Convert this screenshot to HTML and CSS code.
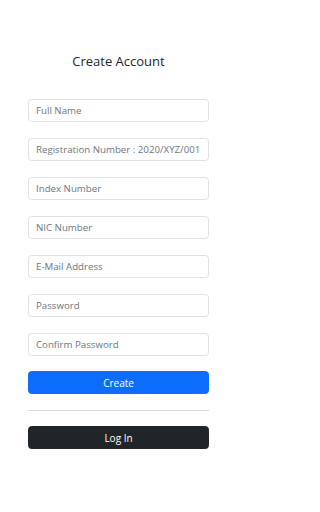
FILE: index.html
```html
<!DOCTYPE html>
<html>
<head>
<meta charset="utf-8">
<link rel="stylesheet" href="styles.css">
</head>
<body>
<div class="page">
  <h4 class="title">Create Account</h4>
  <form class="form">
    <input class="field" type="text" placeholder="Full Name">
    <input class="field" type="text" placeholder="Registration Number : 2020/XYZ/001">
    <input class="field" type="text" placeholder="Index Number">
    <input class="field" type="text" placeholder="NIC Number">
    <input class="field" type="email" placeholder="E-Mail Address">
    <input class="field" type="password" placeholder="Password">
    <input class="field" type="password" placeholder="Confirm Password">
    <button class="btn btn-primary" type="button">Create</button>
  </form>
  <hr class="divider">
  <button class="btn btn-dark" type="button">Log In</button>
</div>
</body>
</html>
```
FILE: styles.css
```css
* { box-sizing: border-box; }
html, body { margin: 0; padding: 0; background: #fff; }
body {
  font-family: "Open Sans", "Noto Sans", "Liberation Sans", sans-serif;
  color: #212529;
  padding-left: 28px;
}
.page {
  width: 181px;
  padding-top: 52px;
  display: flex;
  flex-direction: column;
}
.title {
  margin: 0 0 28px 0;
  font-size: 13px;
  font-weight: 400;
  text-align: center;
  line-height: 19px;
}
.form {
  display: flex;
  flex-direction: column;
  gap: 16px;
  margin: 0;
}
.field {
  display: block;
  width: 100%;
  height: 23px;
  padding: 0 7px;
  font-family: inherit;
  font-size: 9.7px;
  color: #212529;
  border: 1px solid #dee2e6;
  border-radius: 3.6px;
  background: #fff;
  outline: none;
}
.field::placeholder { color: #6c757d; opacity: 1; }
.btn {
  display: block;
  width: 100%;
  height: 23px;
  padding: 0;
  font-family: inherit;
  font-size: 10px;
  border-radius: 3.6px;
  cursor: pointer;
}
.btn-primary {
  margin-top: -1px;
  background: #0d6efd;
  border: 1px solid #0d6efd;
  color: #fff;
}
.btn-dark {
  background: #212529;
  border: 1px solid #212529;
  color: #fff;
}
.divider {
  width: 100%;
  margin: 16px 0 15px 0;
  border: 0;
  border-top: 1px solid #dcdcdc;
  height: 0;
}
```
